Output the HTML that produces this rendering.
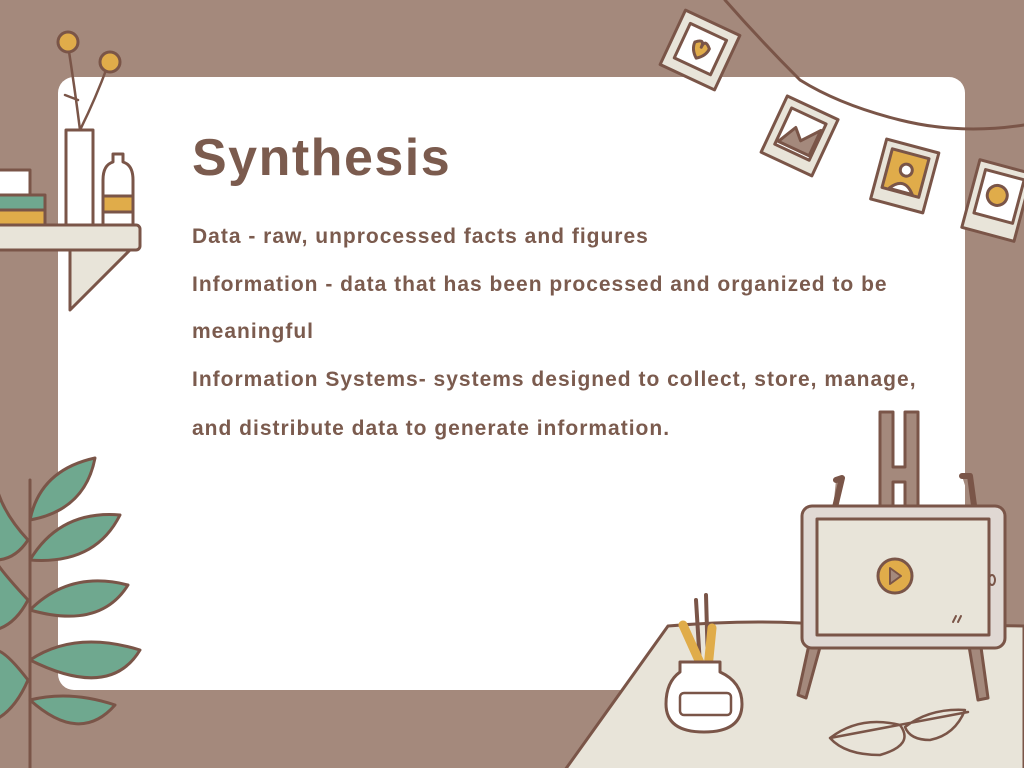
<!DOCTYPE html>
<html><head><meta charset="utf-8"><style>
body{margin:0;width:1024px;height:768px;background:#a4897c;position:relative;overflow:hidden;font-family:"Liberation Sans",sans-serif}
.card{position:absolute;left:58px;top:77px;width:907px;height:613px;background:#fff;border-radius:16px}
h1{position:absolute;left:192px;top:128px;margin:0;font-size:52px;color:#7b5b4e;font-weight:bold;letter-spacing:1.5px}
.t{position:absolute;left:192px;font-size:21px;font-weight:bold;color:#7b5b4e;white-space:nowrap;letter-spacing:1px}
svg{position:absolute;left:0;top:0}
</style></head><body>
<div class="card"></div>
<h1>Synthesis</h1>
<div class="t" style="top:225px">Data - raw, unprocessed facts and figures</div>
<div class="t" style="top:273px">Information - data that has been processed and organized to be</div>
<div class="t" style="top:320px">meaningful</div>
<div class="t" style="top:368px">Information Systems- systems designed to collect, store, manage,</div>
<div class="t" style="top:417px">and distribute data to generate information.</div>
<svg width="1024" height="768" viewBox="0 0 1024 768" fill="none" stroke="#7a5548" stroke-width="3" stroke-linejoin="round" stroke-linecap="round">
<path d="M725 0 Q760 40 800 80 Q840 105 900 120 Q960 135 1024 125"/>
<g transform="rotate(25 700 50)"><rect x="670" y="20" width="60" height="60" fill="#e8e4d9"/><rect x="680" y="30" width="40" height="38" fill="#fff"/><path d="M692 45 q8-8 8 2 q0-10 8-2 q0 8-8 14 q-8-6-8-14z" fill="#e0ac4a"/></g>
<g transform="rotate(25 800 135)"><rect x="772" y="105" width="56" height="62" fill="#e8e4d9"/><rect x="781" y="114" width="38" height="40" fill="#fff"/><path d="M783 150 l10-20 10 10 14-18 v28z" fill="#a4897c"/></g>
<g transform="rotate(15 905 175)"><rect x="878" y="145" width="54" height="62" fill="#e8e4d9"/><rect x="886" y="153" width="38" height="40" fill="#e0ac4a"/><circle cx="905" cy="170" r="6" fill="#fff"/><path d="M893 192 q12-16 24 0z" fill="#fff"/></g>
<g transform="rotate(15 995 200)"><rect x="970" y="165" width="54" height="70" fill="#e8e4d9"/><rect x="978" y="173" width="40" height="45" fill="#fff"/><circle cx="996" cy="195" r="10" fill="#e0ac4a"/></g>
<path d="M70 225 L70 310 L130 250" stroke-width="3" fill="#e8e4d9"/>
<rect x="-5" y="225" width="145" height="25" rx="4" fill="#e8e4d9"/>
<rect x="66" y="130" width="27" height="95" fill="#fff"/>
<path d="M80 130 Q75 90 68 45 M80 130 Q95 100 108 65 M78 100 L65 95" stroke-width="2.5"/>
<circle cx="68" cy="42" r="10" fill="#e0ac4a"/><circle cx="110" cy="62" r="10" fill="#e0ac4a"/>
<path d="M103 180 q0-15 10-18 v-8 h10 v8 q10 3 10 18 v45 h-30z" fill="#fff"/>
<rect x="103" y="196" width="30" height="16" fill="#e0ac4a"/>
<rect x="-5" y="170" width="35" height="25" fill="#fff"/>
<rect x="-5" y="195" width="50" height="15" fill="#6fa88f"/><rect x="-5" y="210" width="50" height="15" fill="#e0ac4a"/>
<path d="M30 768 V480" stroke-width="3"/>
<g fill="#6fa88f">
<path d="M30 520 Q40 470 95 458 Q85 510 30 520z"/>
<path d="M30 560 Q60 510 120 515 Q95 565 30 560z"/>
<path d="M30 610 Q70 570 128 585 Q100 630 30 610z"/>
<path d="M30 660 Q75 630 140 650 Q110 700 30 660z"/>
<path d="M30 700 Q70 690 115 705 Q80 745 30 700z"/>
<path d="M28 540 Q0 510 -5 480 L-5 560 Q15 560 28 540z"/>
<path d="M28 600 Q0 570 -5 560 L-5 630 Q15 625 28 600z"/>
<path d="M28 680 Q5 650 -5 650 L-5 720 Q15 710 28 680z"/>
</g>
<path d="M565 770 L668 626 Q740 620 800 623 L1024 626 V770z" fill="#e8e4d9"/>
<path d="M836 480 L842 478 L832 520 M962 476 L970 476 L976 520" fill="#a4897c" stroke-width="6"/>
<path d="M880 412 h13 v55 h12 v-55 h13 v100 h-13 v-30 h-12 v30 h-13z" fill="#a4897c"/>
<path d="M810 640 L798 695 L806 698 L822 640z M968 640 L978 700 L988 698 L980 640z" fill="#a4897c"/>
<rect x="802" y="506" width="203" height="142" rx="10" fill="#e0d8d3"/>
<rect x="817" y="519" width="172" height="116" fill="#e8e4d9"/>
<circle cx="895" cy="576" r="17" fill="#e0ac4a"/>
<path d="M890 568 l11 8 -11 8z" fill="#a4897c" stroke-width="2"/>
<ellipse cx="992" cy="580" rx="3" ry="5" stroke-width="2"/>
<path d="M953 622 l3-6 M958 622 l3-6" stroke-width="2"/>
<path d="M696 600 L700 665 M706 595 L708 665" stroke-width="4"/>
<path d="M683 625 l18 40 M712 628 l-4 40" stroke="#e0ac4a" stroke-width="9"/>
<path d="M680 662 h40 v10 q22 10 22 32 q0 28-38 28 q-38 0-38-28 q0-22 14-32z" fill="#fff"/>
<rect x="680" y="693" width="51" height="22" rx="4" fill="#fff" stroke-width="2.5"/>
<path d="M830 738 Q860 715 900 725 Q915 745 880 755 Q845 755 830 738z M905 727 Q930 708 965 710 Q955 735 930 740 Q910 740 905 727z M830 738 L968 712" stroke-width="2.5"/>
</svg>
</body></html>
